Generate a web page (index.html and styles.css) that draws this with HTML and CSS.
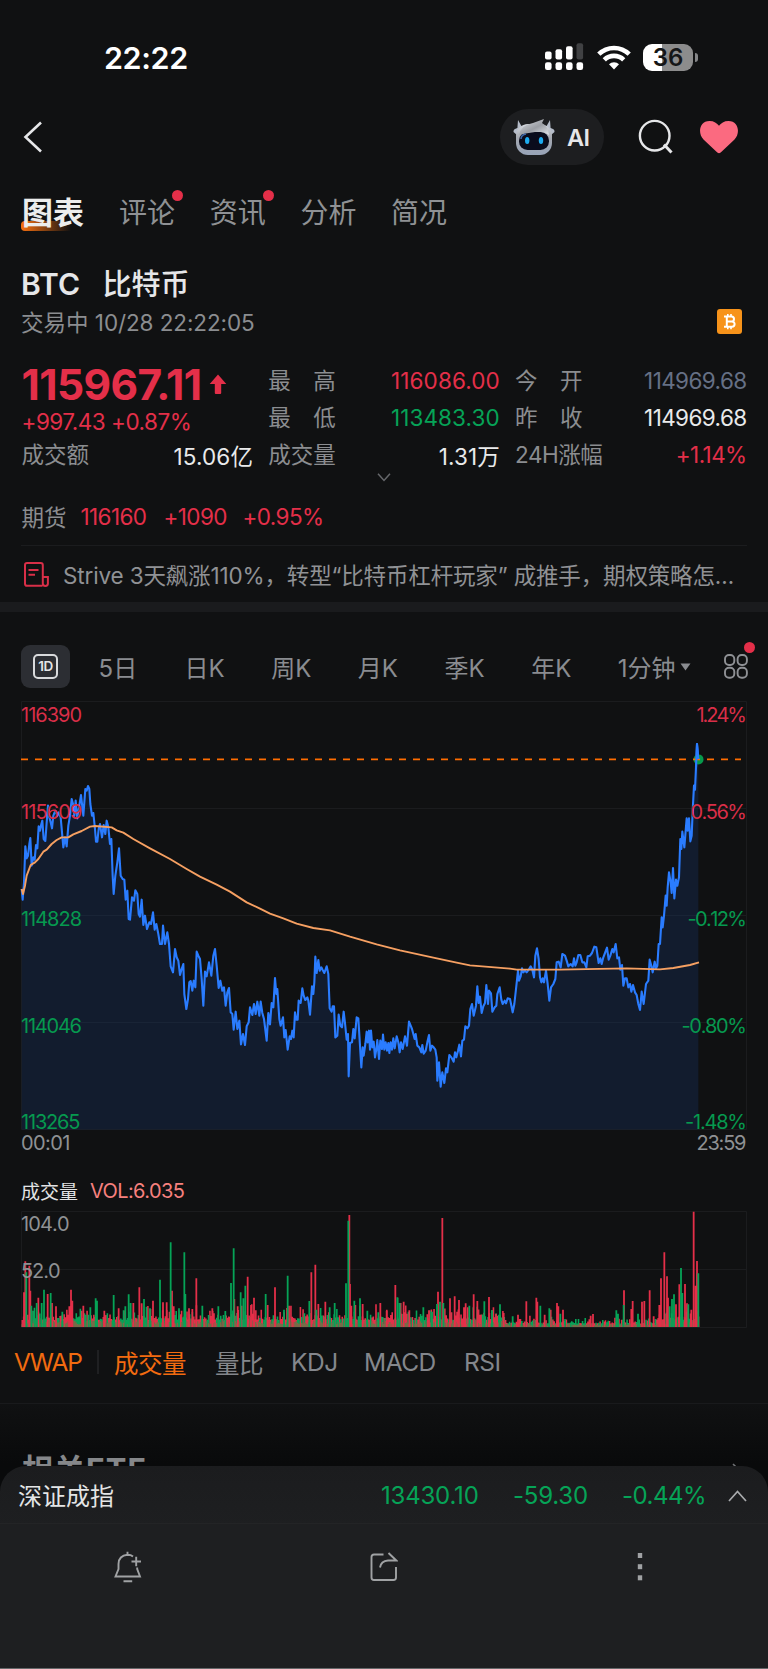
FILE: index.html
```html
<!DOCTYPE html>
<html lang="zh-CN">
<head>
<meta charset="utf-8">
<title>BTC 比特币</title>
<link rel="stylesheet" href="styles.css">
</head>
<body>
<div class="screen">
  <header class="status">
    <span class="clock">22:22</span>
    <svg class="signal" width="39" height="28" viewBox="0 0 39 28">
      <g fill="#fff">
        <rect x="0" y="8.5" width="6.6" height="8" rx="2"/><rect x="10.5" y="6.2" width="6.6" height="10.3" rx="2"/><rect x="21" y="3.2" width="6.6" height="13.3" rx="2"/>
        <rect x="0" y="19.3" width="6.6" height="7.6" rx="2.2"/><rect x="10.5" y="19.3" width="6.6" height="7.6" rx="2.2"/><rect x="21" y="19.3" width="6.6" height="7.6" rx="2.2"/><rect x="31.5" y="19.3" width="6.6" height="7.6" rx="2.2"/>
      </g>
      <rect x="31.5" y="0.2" width="6.6" height="16.3" rx="2" fill="#404143"/>
    </svg>
    <svg class="wifi" width="34" height="25" viewBox="0 0 34 25">
      <g fill="none" stroke="#fff" stroke-width="4.6"><path d="M1.8 9.2a21.6 21.6 0 0 1 30.4 0"/><path d="M7.3 14.9a13.8 13.8 0 0 1 19.4 0"/></g>
      <path d="M17 24.5l-5-5.2a7 7 0 0 1 10 0z" fill="#fff"/>
    </svg>
    <div class="battery"><span class="cell">36</span><span class="nub"></span></div>
  </header>

  <nav class="nav">
    <svg class="back" width="20" height="32" viewBox="0 0 20 32"><path d="M18 1.5L2.5 16L18 30.5" fill="none" stroke="#e6e7e9" stroke-width="2.6"/></svg>
    <div class="ai">
      <svg width="42" height="38" viewBox="0 0 42 38">
        <defs>
          <linearGradient id="shell" x1="0" y1="0" x2="0" y2="1"><stop offset="0" stop-color="#d5d9df"/><stop offset=".45" stop-color="#a4a8b0"/><stop offset="1" stop-color="#98a4b8"/></linearGradient>
          <linearGradient id="hair" x1="0" y1="0" x2="1" y2="1"><stop offset="0" stop-color="#dcdfe4"/><stop offset=".55" stop-color="#9b9ea4"/><stop offset="1" stop-color="#e2e5ea"/></linearGradient>
        </defs>
        <path d="M5 2L4.4 10Q0 11 .5 14L4 17L9 9zM37 2L37.6 10Q42 11 41.500 14L38 17L33 9z" fill="#b5bcc9"/>
        <rect x="3" y="6" width="36" height="31" rx="12" fill="url(#shell)"/>
        <rect x="6" y="14" width="30" height="18" rx="8.500" fill="#0a0c1c"/>
        <path d="M6 17Q8 7 20 5L31 1L29 5Q35 8 36 17Q30 13 22 14Q14 15 6 17z" fill="url(#hair)"/>
        <path d="M8 21Q8 17 13 16" stroke="#3e66a4" stroke-width="1.600" fill="none"/>
        <ellipse cx="14.200" cy="22.500" rx="2.200" ry="3.600" fill="#1dabf0"/><ellipse cx="28" cy="22.500" rx="2.200" ry="3.600" fill="#1dabf0"/>
      </svg>
      <span>AI</span>
    </div>
    <svg class="search" width="36" height="36" viewBox="0 0 36 36" fill="none" stroke="#e6e7e9" stroke-width="2.400"><circle cx="16.700" cy="16.700" r="14.800"/><path d="M26 25.500L33.500 33.500" stroke-width="3"/></svg>
    <svg class="heart" width="40" height="34" viewBox="0 0 40 34"><path d="M20 33.200Q18.600 33.200 17.500 31.800L4.500 19.500C-1.500 13.500.2 1 10.500.9C15 .9 18 3 20 5.800C22 3 25 .9 29.500.9C39.800 1 41.500 13.500 35.500 19.500L22.500 31.800Q21.400 33.200 20 33.200z" fill="#fb6a80"/></svg>
  </nav>

  <div class="tabs">
    <span class="tab on">图表</span><span class="tab dot">评论</span><span class="tab dot">资讯</span><span class="tab">分析</span><span class="tab">简况</span>
  </div>

  <section class="title">
    <h1><span class="sym">BTC</span>比特币</h1>
    <div class="sub">
      <span>交易中 <span class="stamp">10/28 22:22:05</span></span>
      <svg width="25" height="25" viewBox="0 0 25 25"><rect width="25" height="25" rx="3" fill="#f7931a"/><g fill="none" stroke="#fff" stroke-width="2"><path d="M7 7.500H14.500a2.400 2.400 0 0 1 0 5H10M7 17.700H15a2.600 2.600 0 0 0 0-5.200M9.800 7.500V17.700"/><path d="M10.800 5V7.500M14 5V7.500M10.800 17.700V20.200M14 17.700V20.200" stroke-width="1.600"/></g></svg>
    </div>
  </section>

  <section class="quote">
    <div class="col">
      <div class="price"><span>115967.11</span><svg width="18" height="21" viewBox="0 0 18 21"><path d="M9 .5L17.300 10H12.200V19Q12.200 20 11.200 20H6.800Q5.800 20 5.800 19V10H.7z" fill="#e42f49"/></svg></div>
      <div class="chg">+997.43 +0.87%</div>
      <div class="row"><span class="lab">成交额</span><span class="val loose">15.06亿</span></div>
    </div>
    <div class="col">
      <div class="row"><span class="lab wide"><i>最</i><i>高</i></span><span class="val up loose">116086.00</span></div>
      <div class="row"><span class="lab wide"><i>最</i><i>低</i></span><span class="val down loose">113483.30</span></div>
      <div class="row"><span class="lab">成交量</span><span class="val loose">1.31万</span></div>
    </div>
    <div class="col">
      <div class="row"><span class="lab wide"><i>今</i><i>开</i></span><span class="val flat">114969.68</span></div>
      <div class="row"><span class="lab wide"><i>昨</i><i>收</i></span><span class="val">114969.68</span></div>
      <div class="row"><span class="lab tight">24H涨幅</span><span class="val up">+1.14%</span></div>
    </div>
  </section>
  <svg class="more" width="14" height="9" viewBox="0 0 14 9"><path d="M1 .8L7 7.500L13 .8" fill="none" stroke="#66686b" stroke-width="1.500"/></svg>

  <div class="futures"><span class="lab">期货</span><b class="f1">116160</b><b class="f2">+1090</b><b class="f3">+0.95%</b></div>

  <div class="news">
    <svg width="25" height="25" viewBox="0 0 25 25" fill="none" stroke="#d92f48" stroke-width="2"><path d="M18.500 23.800H3Q1 23.800 1 21.700V3Q1 1 3 1H16.700Q18.800 1 18.800 3V21.500Q18.800 23.900 21.400 23.900Q23.900 23.900 23.900 21.500V15H19"/><path d="M4.500 8H14.500M4.500 12.700H11"/></svg>
    <span>Strive 3天飙涨110%，转型“比特币杠杆玩家” 成推手，期权策略怎…</span>
  </div>
  <div class="band"></div>

  <div class="periods">
    <span class="oneday"><em>1D</em></span>
    <span class="p">5日</span><span class="p">日K</span><span class="p">周K</span><span class="p">月K</span><span class="p">季K</span><span class="p">年K</span>
    <span class="minute">1分钟</span>
    <svg class="tri" width="11" height="8" viewBox="0 0 11 8"><path d="M.5 .5H10.500L5.500 7.500z" fill="#8a8c90"/></svg>
    <span class="apps"><svg width="24" height="25" viewBox="0 0 24 25" fill="none" stroke="#8f9195" stroke-width="1.900"><rect x="1" y="1" width="9.300" height="10" rx="4"/><rect x="13.600" y="1" width="9.300" height="10" rx="4"/><rect x="1" y="13.800" width="9.300" height="10" rx="4"/><rect x="13.600" y="13.800" width="9.300" height="10" rx="4"/></svg></span>
  </div>

  <svg class="chart" width="768" height="458" viewBox="0 702 768 458">
    <g class="grid"><path d="M21.500 702.500H746.500V1130.500H21.500zM21.500 809.500H746.500M21.500 916.500H746.500M21.500 1023.500H746.500"/></g>
    <path id="area"/><path id="line"/><path id="vwap"/>
    <circle cx="698.500" cy="760.400" r="5" fill="#079a4c"/>
    <path d="M21 760.400H741" stroke="#ff6d00" stroke-width="1.900" stroke-dasharray="7 7"/>
    <path id="tip"/>
    <g class="axis">
      <text class="u" x="21" y="723" textLength="61">116390</text><text class="u" x="21" y="819.500" textLength="61.500">115609</text>
      <text class="d" x="21" y="926.500" textLength="61">114828</text><text class="d" x="21" y="1033.500" textLength="61">114046</text><text class="d" x="21" y="1130" textLength="59.500">113265</text>
      <text class="g" x="21" y="1151" textLength="49.500">00:01</text>
      <text class="u" x="696.500" y="723" textLength="50.500">1.24%</text><text class="u" x="690.500" y="819.500" textLength="56.500">0.56%</text>
      <text class="d" x="687.500" y="926.500" textLength="59.500">-0.12%</text><text class="d" x="681.500" y="1033.500" textLength="65.500">-0.80%</text><text class="d" x="685" y="1130" textLength="62">-1.48%</text>
      <text class="g" x="696.500" y="1151" textLength="50">23:59</text>
    </g>
  </svg>

  <div class="volhead"><span>成交量</span><b>VOL:6.035</b></div>
  <svg class="vol" width="768" height="118" viewBox="0 1212 768 118">
    <g class="grid"><path d="M21.500 1212.500H746.500V1328.500H21.500zM21.500 1270.500H746.500"/></g>
    <path id="vr"/><path id="vg"/><path id="vm"/><path id="tr"/><path id="tg"/>
    <g class="axis"><text class="g" x="21" y="1232" textLength="48.500">104.0</text><text class="g" x="21" y="1279" textLength="39.500">52.0</text></g>
  </svg>

  <div class="inds">
    <span class="i1 on">VWAP</span><span class="sep"></span><span class="i2 on">成交量</span><span class="i3">量比</span><span class="i4">KDJ</span><span class="i5">MACD</span><span class="i6">RSI</span>
  </div>
  <section class="etf"><h2>相关ETF</h2><svg width="10" height="18" viewBox="0 0 10 18"><path d="M1 1L9 9L1 17" fill="none" stroke="#707275" stroke-width="1.600"/></svg></section>
</div>

<footer class="sheet">
  <div class="index"><span class="name">深证成指</span><span class="x1">13430.10</span><span class="x2">-59.30</span><span class="x3">-0.44%</span><svg width="19" height="12" viewBox="0 0 19 12"><path d="M1 11L9.500 1.500L18 11" fill="none" stroke="#a9abad" stroke-width="1.700"/></svg></div>
  <div class="actions">
    <svg width="28" height="32" viewBox="0 0 28 32" fill="none" stroke="#a0a2a4" stroke-width="1.900"><path d="M19 5.500Q17 3.800 13.500 3.800Q4.800 4.500 4.500 13V18L1.500 25.500H26L23.200 18V16.500M13.500 .8V4M9.500 30.300H18.200M17.500 10.500H27M22.200 5.700V15.300"/></svg>
    <svg width="28" height="29" viewBox="0 0 28 29" fill="none" stroke="#a0a2a4" stroke-width="1.900"><path d="M13.500 2.500H4Q1.500 2.500 1.500 5V25.500Q1.500 28 4 28H23.500Q26 28 26 25.500V15M18.500 1L26.300 8.500H18Q11 9 10 15.500"/></svg>
    <svg width="6" height="28" viewBox="0 0 6 28" fill="#a0a2a4"><rect x=".8" y="0" width="4.400" height="5"/><rect x=".8" y="11.200" width="4.400" height="5"/><rect x=".8" y="22.300" width="4.400" height="5"/></svg>
  </div>
</footer>
<script src="chart.js"></script>
</body>
</html>
```

FILE: styles.css
```css
* { box-sizing: border-box; }
html, body { margin: 0; background: #101112; }
body { position: relative; width: 768px; height: 1669px; overflow: hidden; font-family: Inter, "Noto Sans CJK SC", sans-serif; color: #e6e7e9; }
svg { display: block; flex: none; }
b, i, em { font-weight: inherit; font-style: normal; }
span, b { white-space: nowrap; }

.status { display: flex; align-items: center; height: 92px; padding: 22px 0 0 104px; }
.clock { width: 441px; font-size: 30.5px; font-weight: 600; letter-spacing: -0.4px; color: #fff; }
.wifi { margin-left: 13px; }
.battery { display: flex; align-items: center; gap: 1.5px; margin-left: 12px; }
.cell { width: 50px; height: 27px; border-radius: 9px; background: linear-gradient(90deg, #fff 19px, #8c8c8c 19px); color: #151617; font-size: 24px; font-weight: 600; line-height: 27px; text-align: center; }
.nub { width: 3.5px; height: 9px; border-radius: 0 4px 4px 0; background: #858688; }

.nav { display: flex; align-items: center; height: 90px; padding-left: 23px; }
.ai { display: flex; align-items: center; width: 104px; height: 56px; margin-left: 457px; padding-left: 13px; gap: 12px; border-radius: 28px; background: #1d1e20; font-size: 23.5px; font-weight: 600; letter-spacing: -0.5px; }
.search { margin: 0 0 0 34px; }
.heart { margin-left: 25px; }

.tabs { display: flex; align-items: center; height: 60px; padding: 0 0 3px 22px; font-size: 28px; color: #8f9194; }
.tab { position: relative; width: 90.7px; }
.tab.on { width: 97px; font-size: 31px; font-weight: 700; color: #eceded; z-index: 0; }
.tab.on::before { content: ""; position: absolute; z-index: -1; left: -1px; bottom: 2px; width: 50px; height: 10px; border-radius: 4px 0 0 4px; background: linear-gradient(90deg, #f77010, rgba(247,112,16,0)); }
.dot::after { content: ""; position: absolute; left: 53px; top: -1px; width: 11px; height: 11px; border-radius: 50%; background: #e42f49; }

.title { padding: 25px 26px 0 21px; }
h1 { margin: 0; height: 34px; line-height: 34px; font-size: 29px; font-weight: 500; color: #e6e7e9; }
.sym { display: inline-block; width: 81.5px; font-size: 30px; font-weight: 600; letter-spacing: 0; }
.sub { display: flex; justify-content: space-between; align-items: center; height: 30px; margin-top: 5px; font-size: 22.5px; color: #8b8d90; }
.stamp { letter-spacing: -0.1px; }

.quote { display: grid; grid-template-columns: repeat(3, 231.5px); column-gap: 15.3px; margin-top: 26px; padding-left: 21.500px; height: 111px; }
.col { display: flex; flex-direction: column; }
.row { display: flex; justify-content: space-between; align-items: center; height: 37.2px; font-size: 22.500px; }
.row .lab { margin-top: -3px; }
.lab { color: #8b8d90; }
.tight { letter-spacing: -0.5px; }
.wide { display: flex; justify-content: space-between; width: 67.500px; }
.val { font-size: 22.500px; letter-spacing: -0.6px; color: #e9eaeb; }
.val.loose { letter-spacing: 0.1px; }
.val.up { color: #e42f49; } .val.down { color: #06a357; } .val.flat { color: #667085; }
.price { display: flex; align-items: center; gap: 7px; height: 45px; font-size: 42.500px; font-weight: 700; letter-spacing: -0.6px; color: #e42f49; }
.chg { height: 29.400px; line-height: 29.400px; font-size: 22.500px; letter-spacing: -0.5px; color: #e42f49; }
.more { margin: 0 0 0 377px; }
.futures { display: flex; align-items: center; height: 40px; margin: 14px 0 9px; padding-left: 21.500px; font-size: 22.500px; letter-spacing: -0.6px; color: #e42f49; }
.futures .lab { width: 59px; letter-spacing: 0; } .f1 { width: 83px; } .f2 { width: 79px; }
.news { display: flex; align-items: center; gap: 14px; height: 57px; margin: 0 21px; padding-left: 3px; border-top: 1.500px solid #1b1c1e; font-size: 22.500px; letter-spacing: -0.15px; color: #909295; }
.band { height: 10px; background: #1a1b1d; }

.periods { display: flex; align-items: center; height: 43px; margin: 33px 0 13px; padding-left: 21px; font-size: 24px; color: #8a8c90; }
.oneday { display: flex; align-items: center; justify-content: center; width: 49px; height: 43px; margin-right: 4.500px; border-radius: 9px; background: #2c2e33; }
.oneday em { width: 25px; height: 25px; border: 2px solid #d9dadc; border-radius: 5px; font-size: 13.500px; font-weight: 600; line-height: 21px; text-align: center; color: #e3e4e6; letter-spacing: -0.5px; }
.p { width: 86.700px; text-align: center; }
.minute { width: 62px; margin-left: 23px; letter-spacing: 0; }
.apps { position: relative; margin-left: 33.500px; }
.apps::after { content: ""; position: absolute; left: 20px; top: -12px; width: 11px; height: 11px; border-radius: 50%; background: #e42f49; }

.grid path { fill: none; stroke: #1b1c1e; stroke-width: 1; }
.axis text { font-size: 20px; font-kerning: none; font-feature-settings: "calt" 0; }
.u { fill: #d92e48; } .d { fill: #06994f; } .g { fill: #8f9194; }
#area { fill: rgba(23, 57, 111, .3); }
#line, #tip { fill: none; stroke: #2a7cff; stroke-width: 2.100; stroke-linejoin: round; }
#vwap { fill: none; stroke: #f6a062; stroke-width: 1.900; stroke-linejoin: round; }
#vr, #tr { fill: #e42f49; } #vg, #tg { fill: #06a357; } #vm { fill: #776b48; }

.volhead { display: flex; align-items: center; gap: 12px; height: 40px; margin-top: 11.500px; margin-bottom: .5px; padding-left: 21px; font-size: 19px; color: #e2e3e4; }
.volhead b { font-size: 20px; letter-spacing: -0.6px; color: #f6807e; }
.inds { display: flex; align-items: center; height: 66px; padding-left: 14px; font-size: 24.500px; letter-spacing: -0.5px; color: #84878c; }
.inds .on { color: #f26b10; }
.i1 { width: 83px; } .inds .i1 { letter-spacing: -1.1px; } .sep { width: 2px; height: 24px; background: #1f2022; margin-right: 15px; }
.i2 { width: 101px; } .i3 { width: 76px; } .i4 { width: 73px; } .i5 { width: 100px; }
.etf { display: flex; justify-content: space-between; height: 264px; margin-top: 8px; padding: 46px 26px 0 22px; border-top: 1.500px solid #191a1c; background: linear-gradient(#101112, #090a0b 60px); }
h2 { margin: 0; line-height: 40px; font-size: 31px; font-weight: 700; letter-spacing: 1px; color: #85878a; }
.etf svg { margin-top: 13px; }

.sheet { position: absolute; left: 0; right: 0; bottom: 0; height: 203px; border-radius: 26px 26px 0 0; border-bottom: 1px solid #66686a; background: linear-gradient(#1b1c1e, #1e1f21 60px); }
.index { display: flex; align-items: center; height: 58px; padding: 2px 0 0 18px; border-bottom: 1px solid #232426; font-size: 24px; color: #06a357; letter-spacing: -0.2px; }
.name { width: 363px; margin-top: -2px; color: #e4e5e6; letter-spacing: 0; }
.x1 { width: 132px; } .x2 { width: 109px; } .x3 { width: 106px; letter-spacing: -0.5px; }
.actions { display: grid; grid-template-columns: repeat(3, 256px); justify-items: center; align-items: center; height: 60px; padding-top: 25px; }
```

FILE: chart.js
```javascript
const parse = s => s.trim().split(/\s+/).map(p => p.split(',').map(Number));
// Series are stored in thirds of a pixel, in blocks with an x/y origin.
const block = (ox, oy, s) => parse(s).map(([x, y]) => [(x + ox) / 3, 690 + (y + oy) / 3]);
const price = [
  ...block(0, 0, `65,600 68,632 72,580 76,472 80,508 84,500 88,465 91,447 95,530 100,505 104,512 108,468 112,478 116,412 120,425 124,405 127,395 131,450 136,456 140,400 144,350 148,385 152,400 156,418 160,380 166,365 172,380 176,370 182,385 186,430 190,475 195,445 200,472 205,410 210,380 215,330 219,345 223,380 227,335 232,388 238,350 243,318 250,380 256,300 260,305 264,291 268,300 271,345 276,380 280,372 285,420 288,458 292,458 296,420 300,405 306,445 311,408 316,435 320,395 325,415 330,465 334,450 338,560 341,615 346,560 352,520 357,478 362,560 368,570 373,572 377,632 382,605 386,690 390,692 396,625 402,635 406,604 412,615 416,675 420,683 425,632 430,708 435,680 441,720 448,700 453,705 459,670 464,722 469,705 475,735 480,765 486,765 489,710 495,765 502,730 507,765 512,832 519,850 525,780 530,805 535,815 540,858 545,840 550,825 553,915 559,960 564,930 568,880 572,876 577,905 581,875 586,895 590,788 595,800 600,810 605,870 610,950 615,848 620,862 627,820 634,860 640,800 645,780 650,830 656,897 661,875 667,905 672,895 677,950 682,910 687,897 692,970 697,975 701,1022 707,968 712,1020 718,995 723,1066 729,1035 735,1068 740,1012 746,1000 750,955 757,978 762,945 767,975 772,938 778,980`),
  ...block(750, 630, `32,308 37,342 42,360 50,425 55,342 60,376 65,312 70,325 75,237 79,285 82,270 88,360 92,380 99,355 103,415 107,393 113,452 119,412 123,420 127,395 131,415 135,340 139,362 143,362 146,305 152,312 157,268 161,290 166,303 172,295 175,305 180,347 186,262 190,285 193,250 196,173 200,222 205,183 209,215 214,205 218,213 223,222 230,202 235,225 239,328 245,338 248,322 252,322 256,415 262,410 266,347 271,380 276,385 281,338 285,372 290,422 294,405 296,532 300,432 306,430 310,390 314,418 320,355 325,358 330,440 334,505 338,445 341,470 346,435 350,398 353,430 357,395 360,452 363,395 367,445 371,428 375,475 379,450 382,423 387,480 391,425 396,450 399,407 403,452 407,430 411,455 415,432 418,462 422,430 426,452 430,418 434,448 440,412 445,430 449,460 453,430 458,450 465,412 471,440 477,368 482,380 486,390 490,405 494,420 497,405 502,440 508,445 514,460 517,438 521,464 527,455 532,430 537,408 541,455 546,440 551,445 556,452 560,475 562,545 567,490 572,563 577,520 583,552 588,508 592,520 598,468 604,475 611,488 615,460 619,475 624,455 628,437 633,472 637,425 642,422 646,382 652,388 657,380 661,330 666,315 671,350 678,320 682,262 686,312 690,293 695,342 700,322 705,312 709,258 714,315 717,275 723,283 727,338 734,325 739,320 742,285 749,265 754,302 758,315 764,305 768,313 773,298 780,300`),
  ...block(1500, 0, `32,940 38,970 43,945 48,900 54,845 57,875 62,862 66,838 70,850 75,845 80,850 86,842 92,832 97,842 102,865 106,800 111,778 116,810 120,865 124,880 128,868 132,880 138,845 143,885 148,935 153,895 160,885 166,870 170,820 176,818 182,835 187,795 195,800 200,815 205,832 212,825 218,832 222,808 226,830 230,820 235,798 241,798 247,820 253,820 259,835 263,802 270,800 276,792 283,773 289,775 296,822 301,808 305,825 310,805 315,792 321,776 326,812 331,800 337,780 341,790 347,765 352,808 357,805 361,842 366,828 370,890 375,868 380,868 385,895 390,885 394,908 399,888 405,910 410,918 415,945 420,963 425,908 431,945 438,885 445,875 449,812 454,830 458,850 464,818 468,838 472,830 476,765 480,765 485,685 488,715 492,680 497,620 500,650 503,595 507,550 512,580 515,612 519,537 523,628 528,572 532,590 537,565 541,450 544,480 547,428 553,475 557,425 560,388 563,425 567,388 571,457 575,440 578,365 582,290 585,302 588,235 591,165 595,210`)
];
const vwap = [
  ...block(0, 0, `65,600 69,615 75,590 80,560 92,528 105,520 115,510 130,488 140,482 155,465 170,453 185,445 205,445 220,436 245,426 270,413 285,411 335,415 350,424 370,431 400,450 450,478 510,510 560,540 600,563 650,587 690,608 740,640 780,659`),
  ...block(750, 630, `60,44 100,58 140,74 190,87 240,94 300,113 380,136 450,154 550,176 620,191 660,199 780,209`),
  ...block(1500, 0, `50,842 180,842 380,838 480,841 520,837 570,828 597,820`)
];
const path = pts => 'M' + pts.map(p => p.map(v => v.toFixed(2)).join(' ')).join('L');
const set = (id, d) => document.getElementById(id).setAttribute('d', d);
set('line', path(price));
set('area', path(price) + 'V1130.500H21.700Z');
set('vwap', path(vwap));
set('tip', path(price.slice(-3)));

// Volume peaks: colour, x and top, in thirds of a pixel.
const peaks = (ox, s) => s.split(';').map(p => { const [x, y] = p.slice(1).split(',').map(Number); return [p[0], (x + ox) / 3, (474 - y) / 3]; });
const tall = [
  ...peaks(0, 'R72,370;R76,277;G79,310;R88,290;R91,365;G94,410;G110,402;R115,386;G125,402;G132,362;R143,375;G152,372;R156,402;R168,412;G187,428;R208,412;R213,362;R217,395;R250,410;G271,415;G287,388;G291,395;R313,425;G341,378;R356,418;G376,412;G386,376;G392,402;R400,402;R418,355;R425,403;G432,390;G450,418;R459,395;G480,332;R489,400;R500,400;G512,220;R516,365;R521,412;G537,418;G553,250;G556,375;R567,418;R577,420;R589,328;G607,410;R637,418;G655,412;G676,426;G693,342;G701,238;R703,390;R713,412;G722,370;R725,410;G730,388;G736,350;R743,323;R753,408;R762,386;G797,375;R803,408;R825,355;G863,320;G852,422;R867,410;G928,396;R934,310;R946,287;R955,405;G949,422;R976,398;G989,415;G1004,402;G1038,343;G1045,155;R1048,138;R1050,345;R1054,410;G1063,395;R1066,408;G1080,388;R1088,405;G1102,425;R1141,402;G1135,430;R1160,425;R1186,348;G1192,385'),
  ...peaks(1104, 'R37,402;R56,425;G89,386;G95,402;R98,402;R107,398;R124,424;G166,415;R183,424;G192,428;R210,368;G207,405;G216,398;R223,147;G226,402;R246,388;R260,382;R273,393;R293,403;R288,415;G304,410;R317,376;R328,396;G349,397;R363,384;G372,424;R384,434;G396,406;R407,432;G434,442;R450,437;R475,397;R505,386;R508,398;G517,410;R530,437;G544,418;R548,422;R567,402;R571,412;R585,422;G577,434;R675,435;R668,440;G745,424;G750,434;G767,408;R768,364;R794,396;R790,420;G810,434;R822,398;R829,396;R845,364;R857,442;R874,408;R879,328;R889,250;R897,322;R900,386;G905,412;G912,390;G918,376;R924,406;R934,346;G939,297;G943,372;R951,345;R957,403;G961,406;R970,422;R977,128;R983,350;R987,276;G991,313')
];
let seed = 11;
const rnd = () => (seed = (seed * 16807) % 2147483647) / 2147483647;
const bar = (x, h, w) => `M${x.toFixed(2)} 1328v${(-h).toFixed(2)}h${w}V1328z`;
let r = '', g = '', m = '';
for (let x = 21.500; x < 698; x += 1.35) {
  const quiet = x > 505 && x < 655, base = quiet ? 3.5 : 7;
  const h = base + rnd() * rnd() * (quiet ? 8 : 16);
  if (rnd() < 0.58) r += bar(x, h, 1.6); else g += bar(x, h, 1.6);
  m += bar(x, base * 0.35 + rnd() * base * 0.6, rnd() < 0.6 ? 1.35 : 0.5);
}
set('vr', r); set('vg', g); set('vm', m);
set('tr', tall.filter(p => p[0] === 'R').map(p => bar(p[1] - 0.9, p[2], 1.8)).join(''));
set('tg', tall.filter(p => p[0] === 'G').map(p => bar(p[1] - 0.9, p[2], 1.8)).join(''));
```
